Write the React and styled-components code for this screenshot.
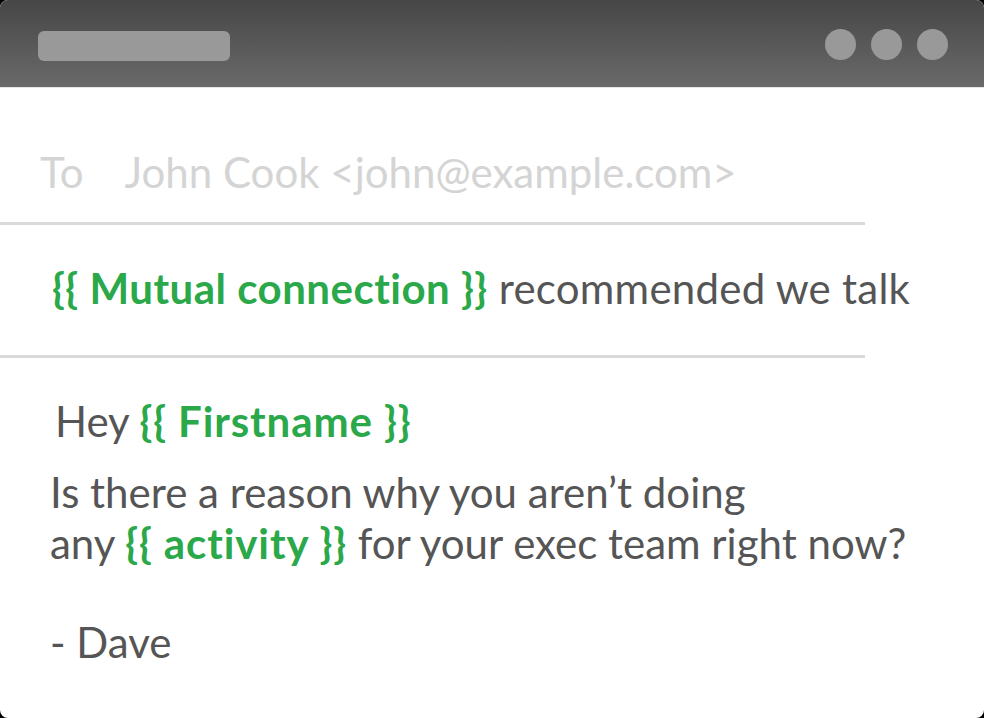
import * as React from 'react';
import styled, { createGlobalStyle } from 'styled-components';

const GlobalStyle = createGlobalStyle`
	html, body {
		margin: 0;
		padding: 0;
		background: #000;
	}
	body {
		font-family: Lato, "Open Sans", sans-serif;
	}
`;

const Window = styled.div`
	width: 984px;
	height: 718px;
	background: #fff;
	border-radius: 8px;
	overflow: hidden;
	display: flex;
	flex-direction: column;
`;

const TitleBar = styled.div`
	height: 88px;
	flex: none;
	display: flex;
	align-items: center;
	justify-content: space-between;
	padding: 0 36px 0 38px;
	background: linear-gradient(to bottom, #464646, #6a6a6a);
	border-bottom: 1px solid #e6e6e6;
	box-sizing: border-box;
`;

const AddressPill = styled.div`
	width: 192px;
	height: 30px;
	margin-top: 4px;
	border-radius: 6px;
	background: #999;
`;

const Dots = styled.div`
	display: flex;
	gap: 15px;
	margin-top: 2px;
`;

const Dot = styled.span`
	width: 31px;
	height: 31px;
	border-radius: 50%;
	background: #999;
`;

const Field = styled.div`
	padding: ${({ $top }) => $top}px 0 ${({ $bottom }) => $bottom}px ${({ $left }) => $left}px;
	font-size: 42px;
	line-height: 50px;
	letter-spacing: ${({ $muted }) => ($muted ? 0 : 0.25)}px;
	white-space: nowrap;
	color: ${({ $muted }) => ($muted ? '#d4d4d4' : '#555')};
`;

const Label = styled.span`
	margin-right: 41px;
`;

const Divider = styled.hr`
	width: 865px;
	height: 3px;
	margin: 0;
	border: 0;
	background: #d9d9d9;
`;

const Body = styled.div`
	padding: 38px 0 0 50px;
	color: #555;
	font-size: 42px;
`;

const Greeting = styled.p`
	margin: 0 0 21px 5px;
	line-height: 50px;
`;

const Paragraph = styled.p`
	margin: 0 0 ${({ $after }) => $after || 0}px;
	line-height: 51px;
`;

const Tag = styled.strong`
	color: #2aa84a;
	font-weight: 700;
	letter-spacing: ${({ $wide }) => ($wide ? 0.9 : 0.5)}px;
`;

export default function App() {
	return (
		<>
			<GlobalStyle />
			<Window>
				<TitleBar>
					<AddressPill />
					<Dots>
						<Dot />
						<Dot />
						<Dot />
					</Dots>
				</TitleBar>
				<Field $top={59} $bottom={25} $left={40} $muted>
					<Label>To</Label>John Cook &lt;john@example.com&gt;
				</Field>
				<Divider />
				<Field $top={38} $bottom={42} $left={52}>
					<Tag>{'{{ Mutual connection }}'}</Tag> recommended we talk
				</Field>
				<Divider />
				<Body>
					<Greeting>
						Hey <Tag $wide>{'{{ Firstname }}'}</Tag>
					</Greeting>
					<Paragraph $after={48}>
						Is there a reason why you aren’t doing
						<br />
						any <Tag $wide>{'{{ activity }}'}</Tag> for your exec team right now?
					</Paragraph>
					<Paragraph>- Dave</Paragraph>
				</Body>
			</Window>
		</>
	);
}
